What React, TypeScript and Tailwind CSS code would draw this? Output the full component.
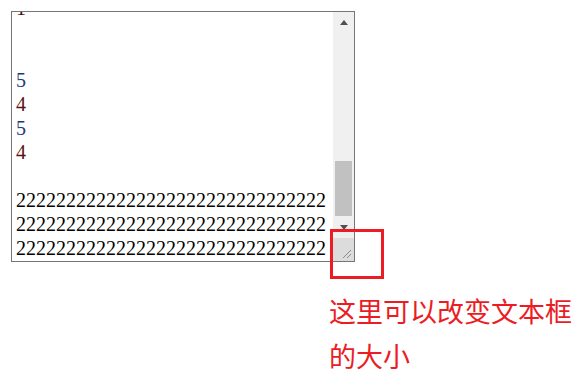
import React from 'react';

const WRAP = '2'.repeat(31);

const LINES: { text: string; color?: string }[] = [
  { text: '1', color: 'text-[#3a0a0a]' },
  { text: '' },
  { text: '' },
  { text: '5', color: 'text-[#23367a]' },
  { text: '4', color: 'text-[#5c1414]' },
  { text: '5', color: 'text-[#23367a]' },
  { text: '4', color: 'text-[#5c1414]' },
  { text: '' },
  { text: WRAP },
  { text: WRAP },
  { text: WRAP },
];

function ScrollBar() {
  return (
    <div className="w-[21px] shrink-0 bg-[#f0f0f0] flex flex-col">
      <div className="h-[21px] flex items-center justify-center">
        <div className="w-0 h-0 border-l-[4px] border-r-[4px] border-b-[5px] border-l-transparent border-r-transparent border-b-[#505050]" />
      </div>
      <div className="flex-1 flex flex-col px-[2px]">
        <div className="h-[128px]" />
        <div className="h-[55px] bg-[#c1c1c1]" />
      </div>
      <div className="h-[21px] flex items-center justify-center">
        <div className="w-0 h-0 border-l-[4px] border-r-[4px] border-t-[5px] border-l-transparent border-r-transparent border-t-[#505050]" />
      </div>
      <div className="h-[23px] bg-[#dcdcdc] relative">
        <svg className="absolute right-[2px] bottom-[2px]" width="10" height="10" viewBox="0 0 10 10">
          <path d="M1 9 L9 1 M5 9 L9 5" stroke="#8a8a8a" strokeWidth="1" fill="none" />
        </svg>
      </div>
    </div>
  );
}

export default function App() {
  return (
    <div className="w-[582px] h-[385px] bg-white relative overflow-hidden">
      <div className="pt-[11px] pl-[11px]">
        <div className="w-[344px] h-[251px] border border-[#767676] flex">
          <div className="flex-1 overflow-hidden">
            <div className="mt-[-16px] pl-[4px] text-[20px] leading-[24px] text-black font-['Liberation_Serif','Times_New_Roman',serif] whitespace-pre">
              {LINES.map((l, i) => (
                <div key={i} className={`h-[24px] ${l.color ?? ''}`}>
                  {l.text}
                </div>
              ))}
            </div>
          </div>
          <ScrollBar />
        </div>
      </div>

      <div className="ml-[329px] mt-[26px] text-[27px] leading-[45px] text-[#ec1c24] font-['Microsoft_YaHei','Noto_Sans_CJK_SC',sans-serif]">
        <div>这里可以改变文本框</div>
        <div>的大小</div>
      </div>

      <div className="absolute left-[330px] top-[229px] w-[54px] h-[50px] border-[3px] border-[#ec1c24]" />
    </div>
  );
}
